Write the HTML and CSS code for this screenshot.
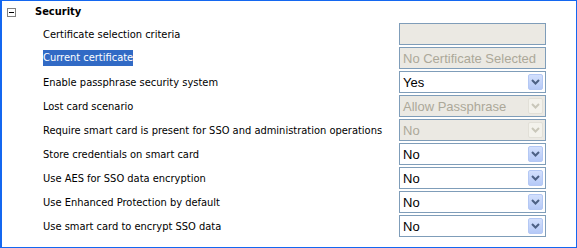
FILE: index.html
```html
<!doctype html>
<html lang="en">
  <head>
    <meta charset="utf-8">
    <title>Security settings</title>
    <link rel="stylesheet" href="styles.css">
  </head>
  <body>
    <div class="panel">
      <div class="group-head">
        <span class="toggle"><span class="minus"></span></span>
        <span class="group-title">Security</span>
      </div>

      <div class="rows">
        <div class="label">Certificate selection criteria</div>
        <div class="field disabled"></div>

        <div class="label"><span class="selected">Current certificate</span></div>
        <div class="field disabled">No Certificate Selected</div>

        <div class="label">Enable passphrase security system</div>
        <div class="field combo">
          <span class="value">Yes</span>
          <span class="drop"><svg width="9" height="6" viewBox="0 0 9 6"><path d="M1 1 L4.5 4.5 L8 1" fill="none" stroke="currentColor" stroke-width="2"/></svg></span>
        </div>

        <div class="label">Lost card scenario</div>
        <div class="field combo disabled">
          <span class="value">Allow Passphrase</span>
          <span class="drop"><svg width="9" height="6" viewBox="0 0 9 6"><path d="M1 1 L4.5 4.5 L8 1" fill="none" stroke="currentColor" stroke-width="2"/></svg></span>
        </div>

        <div class="label">Require smart card is present for SSO and administration operations</div>
        <div class="field combo disabled">
          <span class="value">No</span>
          <span class="drop"><svg width="9" height="6" viewBox="0 0 9 6"><path d="M1 1 L4.5 4.5 L8 1" fill="none" stroke="currentColor" stroke-width="2"/></svg></span>
        </div>

        <div class="label">Store credentials on smart card</div>
        <div class="field combo">
          <span class="value">No</span>
          <span class="drop"><svg width="9" height="6" viewBox="0 0 9 6"><path d="M1 1 L4.5 4.5 L8 1" fill="none" stroke="currentColor" stroke-width="2"/></svg></span>
        </div>

        <div class="label">Use AES for SSO data encryption</div>
        <div class="field combo">
          <span class="value">No</span>
          <span class="drop"><svg width="9" height="6" viewBox="0 0 9 6"><path d="M1 1 L4.5 4.5 L8 1" fill="none" stroke="currentColor" stroke-width="2"/></svg></span>
        </div>

        <div class="label">Use Enhanced Protection by default</div>
        <div class="field combo">
          <span class="value">No</span>
          <span class="drop"><svg width="9" height="6" viewBox="0 0 9 6"><path d="M1 1 L4.5 4.5 L8 1" fill="none" stroke="currentColor" stroke-width="2"/></svg></span>
        </div>

        <div class="label">Use smart card to encrypt SSO data</div>
        <div class="field combo">
          <span class="value">No</span>
          <span class="drop"><svg width="9" height="6" viewBox="0 0 9 6"><path d="M1 1 L4.5 4.5 L8 1" fill="none" stroke="currentColor" stroke-width="2"/></svg></span>
        </div>
      </div>
    </div>
  </body>
</html>
```

FILE: styles.css
```css
html, body {
  margin: 0;
  background: #fff;
}
.panel {
  box-sizing: border-box;
  width: 577px;
  height: 248px;
  border: 1px solid #1467f0;
  border-left-width: 2px;
  font-family: "DejaVu Sans Condensed", "DejaVu Sans", sans-serif;
  font-size: 11px;
  color: #000;
}
.group-head {
  display: flex;
  align-items: center;
  height: 21px;
  padding-left: 5px;
}
.toggle {
  box-sizing: border-box;
  width: 9px;
  height: 9px;
  border: 1px solid #808080;
  display: flex;
  align-items: center;
  justify-content: center;
  margin-top: 1px;
}
.minus {
  width: 5px;
  height: 1px;
  background: #000;
}
.group-title {
  font-weight: bold;
  margin-left: 19px;
}
.rows {
  display: grid;
  grid-template-columns: 1fr 147px;
  grid-auto-rows: 22px;
  row-gap: 2px;
  padding-left: 41px;
  padding-right: 30px;
  margin-top: 1px;
}
.label {
  display: flex;
  align-items: center;
  white-space: nowrap;
}
.selected {
  background: #316ac5;
  color: #fff;
  padding: 1px 0 2px;
}
.field {
  box-sizing: border-box;
  border: 1px solid #7f9db9;
  background: #fff;
  font-family: "Liberation Sans", Arial, sans-serif;
  font-size: 13px;
  display: flex;
  align-items: center;
  padding-left: 3px;
}
.field.disabled {
  background: #ebe9e3;
  color: #aca899;
}
.combo .value {
  flex: 1;
}
.drop {
  box-sizing: border-box;
  width: 15px;
  height: 16px;
  margin-right: 2px;
  border: 1px solid #b4c8f4;
  border-radius: 2px;
  background: linear-gradient(#d3e0fd, #b5c9f7);
  color: #4d6185;
  display: flex;
  align-items: center;
  justify-content: center;
}
.disabled .drop {
  background: #f3f2ec;
  border-color: #e2e0d8;
  color: #c9c7ba;
}
```
